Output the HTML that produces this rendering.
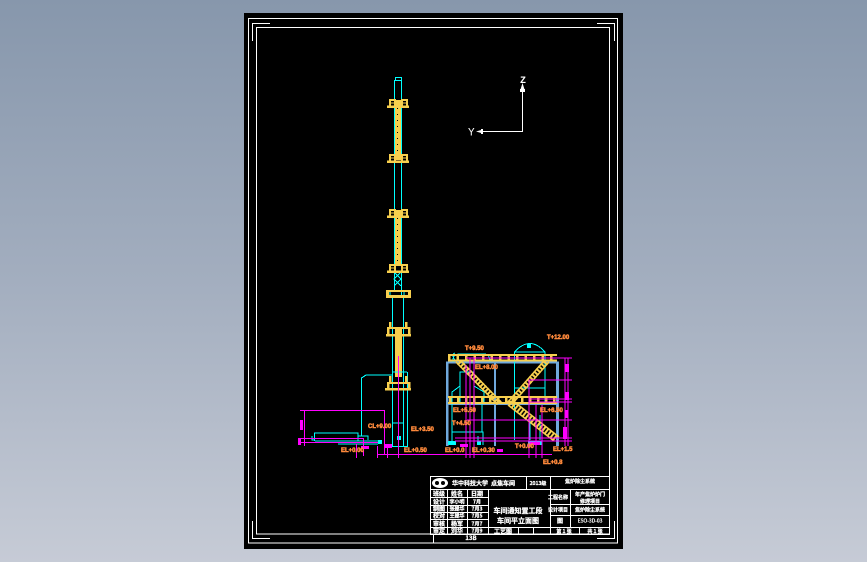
<!DOCTYPE html>
<html><head><meta charset="utf-8"><style>
html,body{margin:0;padding:0;width:867px;height:562px;overflow:hidden;background:linear-gradient(180deg,#8797ac 0%,#a3aebf 50%,#c6cbd6 100%)}
svg{position:absolute;left:0;top:0;display:block}
text{font-family:"Liberation Sans","Noto Sans CJK SC",sans-serif}
.t{fill:#fff;stroke:#fff;stroke-width:.25;font-size:6px;font-weight:700;text-anchor:middle;font-family:"Noto Sans CJK SC",sans-serif}
.s{font-size:5px}
.o{fill:#ff8a3c;font-size:6px;font-weight:700;stroke:#ff8a3c;stroke-width:.5}
</style></head><body>
<svg width="867" height="562" viewBox="0 0 867 562" xmlns="http://www.w3.org/2000/svg">
<defs>
<g id="p" fill="#f7cf4e" shape-rendering="crispEdges">
<rect x="-11" y="6.5" width="22" height="2.5"/><rect x="-9" y="0" width="7" height="2"/><rect x="3" y="0" width="7" height="2"/>
<rect x="-9" y="1" width="2" height="6"/><rect x="-4" y="1" width="2" height="6"/><rect x="3" y="1" width="2" height="6"/><rect x="8" y="1" width="2" height="6"/>
<rect x="-8" y="3.5" width="5" height="1"/><rect x="4" y="3.5" width="5" height="1"/>
</g>
</defs>
<rect x="244" y="13" width="379" height="536" fill="#000"/>
<g fill="none" stroke="#fff" stroke-width="1" shape-rendering="crispEdges">
<rect x="248.5" y="18.5" width="369" height="524.5"/>
<rect x="256.5" y="27.5" width="353" height="506.5"/>
<path d="M252.5 41V23.5H270M597 23.5H614.5V41M252.5 521V538.5H270M597 538.5H614.5V521"/>
<path d="M522.5 92V131.5H483"/>
</g>
<path d="M476 131.5L483 129.5V133.5Z M522.5 83L520 91H525Z" fill="#fff"/>
<rect x="481" y="129" width="2" height="5" fill="#fff"/><rect x="520" y="89" width="5" height="3" fill="#fff"/>
<text x="520" y="83" font-size="10" font-weight="700" fill="#fff" style="font-family:'Liberation Mono',monospace">Z</text>
<text x="468" y="135.5" font-size="11" fill="#fff" style="font-family:'Liberation Mono',monospace">Y</text>

<!-- tower -->
<g shape-rendering="crispEdges">
<rect x="395" y="100" width="6.5" height="60" fill="#f7cf4e"/>
<rect x="395" y="210" width="6.5" height="56" fill="#f7cf4e"/>
<rect x="395" y="327" width="7" height="50" fill="#f7cf4e"/>
<path d="M397.5 108V156" stroke="#000" stroke-width="1" stroke-dasharray="1 5"/>
<path d="M397.5 218V262" stroke="#000" stroke-width="1" stroke-dasharray="1 5"/>
<g fill="none" stroke="#0ff" stroke-width="1">
<path d="M394.5 292V80.5H401.5V298"/>
<path d="M395.5 80V77.5H401.5V80"/>
<path d="M392.5 296V446.5H403.5V296"/>
<path d="M407.5 372V446.5H403M392 372H407"/>
<path d="M361.5 436V378L366 375H392"/>
<path d="M392 423H403"/>
<path d="M394 272L401 279L394 286M401 272L394 279L401 286"/>
<path d="M314.5 441V433H358V441M312 436V440H314M358 436H368V440M315 441H380M338 444H378"/>
<path d="M390 296V291H404V296"/>
</g>
<rect x="397" y="436" width="4" height="4" fill="#0ff"/>
<rect x="378" y="440" width="4" height="4" fill="#0ff"/>
</g>
<use href="#p" x="398" y="99"/>
<use href="#p" x="398" y="154"/>
<use href="#p" x="398" y="209"/>
<use href="#p" x="398" y="264"/>
<g fill="#f7cf4e" shape-rendering="crispEdges">
<rect x="386" y="295" width="25" height="3"/><rect x="386" y="290" width="25" height="2"/><rect x="386" y="290" width="3" height="8"/><rect x="408" y="290" width="3" height="8"/>
<rect x="386" y="334" width="25" height="2.5"/><rect x="387" y="327" width="23" height="2"/><rect x="387" y="327" width="2.5" height="8"/><rect x="408" y="327" width="2.5" height="8"/><rect x="389" y="322" width="2.5" height="6"/><rect x="405" y="322" width="2.5" height="6"/>
<rect x="385" y="388" width="26" height="2.5"/><rect x="387" y="382" width="23" height="2"/><rect x="387" y="382" width="2.5" height="7"/><rect x="408" y="382" width="2.5" height="7"/><rect x="389" y="376" width="2.5" height="6"/><rect x="405" y="376" width="2.5" height="6"/>
</g>

<!-- structure -->
<g shape-rendering="crispEdges">
<g fill="#6fa8dc">
<rect x="446" y="362" width="2.5" height="84"/><rect x="494" y="362" width="2" height="84"/><rect x="556" y="362" width="3" height="84"/>
<rect x="446" y="361.5" width="113" height="2"/><rect x="446" y="403.5" width="113" height="1.5"/>
</g>
<g fill="none" stroke="#0ff" stroke-width="1">
<path d="M514.5 404V352Q530 335 545 352V404M514 352H545M514 355H545"/>
<path d="M514.5 388H545M514.5 404V440"/>
<path d="M453 362Q452 354 460 354H484Q490 354 490 362M455 360Q451 355 455 353"/>
<path d="M460 403V372H474V403M452 403V392L460 386M474 386L484 392V403"/>
<path d="M452 404V432H483V445M482 404V432M452 430V445M478 436V445"/>
<path d="M540 415V440M530 420V440"/>
</g>
<rect x="527" y="344" width="4" height="4" fill="#0ff"/>
<rect x="448" y="441" width="8" height="4" fill="#0ff"/>
<rect x="477" y="441" width="4" height="4" fill="#0ff"/>
<rect x="528" y="441" width="14" height="4" fill="#0ff"/>
</g>
<g fill="none" stroke="#f7cf4e">
<path d="M448 355H557M448 360.5H557M448 397H557M448 403H557" stroke-width="2" shape-rendering="crispEdges"/>
<path d="M448 357.5H557" stroke-width="7" stroke-dasharray="2.5 6" shape-rendering="crispEdges"/>
<path d="M449 400H557" stroke-width="6" stroke-dasharray="2.5 5.5" shape-rendering="crispEdges"/>
<path d="M456 362L496 403M462 362L502 403" stroke-width="1.5"/>
<path d="M459 362L499 403" stroke-width="6" stroke-dasharray="2 1.5"/>
<path d="M543 362L507 403M549 362L513 403" stroke-width="1.5"/>
<path d="M546 362L510 403" stroke-width="6" stroke-dasharray="2 1.5"/>
<path d="M508 405L554 441M512 400L559 437" stroke-width="1.5"/>
<path d="M510 402.5L557 439" stroke-width="6" stroke-dasharray="2 1.5"/>
</g>

<!-- magenta -->
<g fill="none" stroke="#f0f" stroke-width="1" shape-rendering="crispEdges">
<path d="M300 410.5H384.5V454M304.5 410V446M298 438.5H363.5V456M298 442.5H378M356.5 444V458M377.5 446V458M377 454.5H430M398.5 356V458M387.5 446V458"/>
<path d="M430 454.5H552M466 365V458M470 358V458M474 358V458"/>
<path d="M466 358H572M529 380H572M529 399H572M529 402H572M467 420H572M455 438H572M455 441H572M529 380V458M536 405V458M542 405V458"/>
<path d="M568 358V446M565 358V446"/>
</g>
<g fill="#f0f" shape-rendering="crispEdges">
<rect x="565" y="364" width="4" height="8"/><rect x="565" y="392" width="4" height="8"/><rect x="565" y="410" width="3" height="8"/><rect x="563" y="427" width="4" height="12"/>
<rect x="300" y="420" width="3" height="10"/><rect x="298" y="439" width="3" height="6"/>
<rect x="361" y="446" width="8" height="3"/><rect x="384" y="444" width="8" height="4"/>
<rect x="460" y="444" width="8" height="3"/><rect x="530" y="442" width="10" height="3"/><rect x="497" y="449" width="6" height="3"/>
</g>

<!-- orange labels -->
<text class="o" x="368" y="428">CL+9.00</text>
<text class="o" x="411" y="431">EL+3.50</text>
<text class="o" x="341" y="452">EL+0.00</text>
<text class="o" x="404" y="452">EL+0.50</text>
<text class="o" x="465" y="350">T+9.50</text>
<text class="o" x="547" y="339">T+12.00</text>
<text class="o" x="475" y="369">EL+8.00</text>
<text class="o" x="453" y="412">EL+5.50</text>
<text class="o" x="452" y="425">T+4.50</text>
<text class="o" x="540" y="412">EL+6.50</text>
<text class="o" x="515" y="448">T+0.00</text>
<text class="o" x="445" y="452">EL+0.0</text>
<text class="o" x="472" y="452">EL+0.30</text>
<text class="o" x="553" y="451">EL+1.5</text>
<text class="o" x="543" y="464">EL+0.8</text>

<!-- title block -->
<g fill="none" stroke="#fff" stroke-width="1" shape-rendering="crispEdges">
<rect x="430.5" y="476.5" width="179" height="58"/>
<path d="M430 489.5H610M430 497.5H488M430 505.5H488M430 512.5H488M430 519.5H488M430 527.5H610M447.5 490V534M467.5 490V534M488.5 490V534M526.5 476V490M550.5 476V534M518.5 527V534M533.5 527V534M579.5 527V534M570.5 490V527M550 504.5H610M550 515.5H610M433.5 534V543"/>
</g>
<ellipse cx="440" cy="483" rx="8" ry="5" fill="#fff"/><circle cx="437" cy="483" r="2" fill="#000"/><circle cx="443" cy="483" r="2" fill="#000"/>
<text class="t" x="470" y="485.5">华中科技大学</text>
<text class="t" x="503" y="485.5">点焦车间</text>
<text class="t s" x="538" y="485">2013级</text>
<text class="t s" x="580" y="483">焦炉除尘系统</text>
<text class="t" x="439" y="496">班级</text><text class="t" x="457" y="496">姓名</text><text class="t" x="477" y="496">日期</text>
<text class="t" x="439" y="504">设计</text><text class="t s" x="457" y="503.5">李小明</text><text class="t s" x="477" y="503.5">7月</text>
<text class="t" x="439" y="511">制图</text><text class="t s" x="457" y="510.5">张建华</text><text class="t s" x="477" y="510.5">7月3</text>
<text class="t" x="439" y="518">校对</text><text class="t s" x="457" y="517.5">王建华</text><text class="t s" x="477" y="517.5">7月5</text>
<text class="t" x="439" y="526">审核</text><text class="t" x="457" y="526">杨军</text><text class="t s" x="477" y="525.5">7月7</text>
<text class="t" x="439" y="533">审定</text><text class="t" x="457" y="533">刘华</text><text class="t s" x="477" y="532.5">7月9</text>
<text class="t" x="518" y="513" style="font-size:7px">车间通知置工段</text>
<text class="t" x="518" y="523" style="font-size:7px">车间平立面图</text>
<text class="t" x="503" y="533.5">工艺图</text>
<text class="t s" x="558" y="499">工程名称</text>
<text class="t s" x="558" y="511.5">设计项目</text>
<text class="t s" x="590" y="496">年产焦炉炉门</text>
<text class="t s" x="590" y="503">修理项目</text>
<text class="t s" x="590" y="511.5">焦炉除尘系统</text>
<text class="t" x="560" y="523">图</text>
<text class="t s" x="590" y="522.5" style="font-weight:400">ESO-3D-03</text>
<text class="t s" x="564" y="533">第 1 张</text>
<text class="t s" x="595" y="533">共 1 张</text>
<text class="t" x="471" y="540">13B</text>
</svg>
</body></html>
